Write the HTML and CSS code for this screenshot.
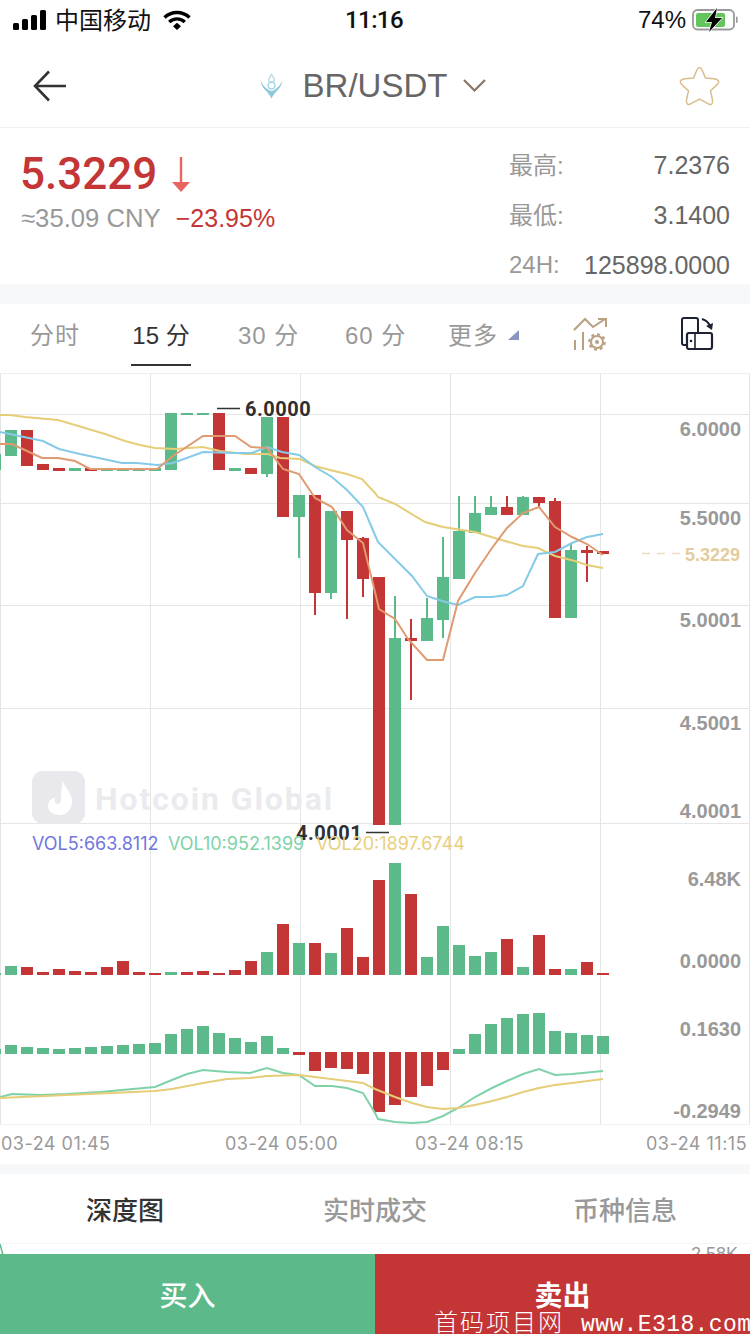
FILE: index.html
```html
<!DOCTYPE html>
<html lang="en">
<head>
  <meta charset="UTF-8" />
  <meta name="viewport" content="width=device-width, initial-scale=1.0"/>
  <title>BR/USDT</title>
  <link rel="stylesheet" href="styles.css">
</head>
<body>
  <div class="status-bar">
    <div class="status-left">
      <svg class="signal" width="34" height="20" viewBox="0 0 34 20">
        <rect x="0" y="13" width="6" height="7" rx="1.5"/>
        <rect x="9" y="9" width="6" height="11" rx="1.5"/>
        <rect x="18" y="5" width="6" height="15" rx="1.5"/>
        <rect x="27" y="0" width="6" height="20" rx="1.5"/>
      </svg>
      <span class="carrier">中国移动</span>
      <svg class="wifi" width="28" height="20" viewBox="0 0 28 20">
        <path d="M1.5 7.5a18 18 0 0 1 25 0" fill="none" stroke="#000" stroke-width="3.4"/>
        <path d="M6.2 12a11.400 11.400 0 0 1 15.600 0" fill="none" stroke="#000" stroke-width="3.4"/>
        <path d="M10 16.200l4-3.400 4 3.400-4 3.800z" fill="#000"/>
      </svg>
    </div>
    <div class="status-time">11:16</div>
    <div class="status-right">
      <span class="battery-pct">74%</span>
      <svg class="battery" width="46" height="24" viewBox="0 0 46 24">
        <rect x="1" y="2" width="41" height="19.500" rx="4.500" fill="#fff" stroke="#999" stroke-width="1.800"/>
        <rect x="4" y="5" width="29" height="14" rx="2" fill="#63c45c"/>
        <rect x="44" y="8.500" width="1.600" height="6.500" rx="0.800" fill="#999"/>
        <path d="M25 0L14 14h6l-3 10 13-14h-7z" fill="#000" stroke="#fff" stroke-width="1.400" paint-order="stroke"/>
      </svg>
    </div>
  </div>

  <div class="top-bar">
    <svg width="34" height="32" viewBox="0 0 34 32">
      <path d="M33 16H2M16 1.500L2 16l14 14.500" fill="none" stroke="#333" stroke-width="2.600"/>
    </svg>
    <div class="pair">
      <svg class="pair-logo" width="23" height="26" viewBox="0 0 23 26">
        <path d="M11.500 1.500c-1.500 2-2.800 4-2.800 5.500s1.300 2.500 2.800 2.500 2.800-1 2.800-2.500-1.300-3.500-2.800-5.500z" fill="none" stroke="#b8dde8" stroke-width="1.300"/>
        <circle cx="11.500" cy="12.500" r="3.400" fill="none" stroke="#a5d5e4" stroke-width="1.500"/>
        <path d="M1 8c-.5 7 7 9.500 10.500 17.500C15 17.500 22.500 15 22 8c-1.500 4.500-4.500 6.500-6.500 8-1.300 1-2.500 2-4 2s-2.700-1-4-2c-2-1.500-5-3.500-6.500-8z" fill="#8cc8dc"/>
      </svg>
      <span class="pair-name">BR/USDT</span>
      <svg width="23" height="13" viewBox="0 0 23 13">
        <path d="M1 1l10.500 10.500L22 1" fill="none" stroke="#8a7565" stroke-width="2.200"/>
      </svg>
    </div>
    <svg width="41" height="40" viewBox="0 0 41 40">
      <path d="M20.500 1.500c1.200 0 2 1 2.600 2.500l3.400 8 8.400.8c3.500.4 5.300 2 4.700 3.800-.4 1.100-1.500 2-2.500 3l-5.600 5.200 1.800 8.200c.5 2.600.3 4.700-1.100 5.300-1 .5-2.300-.1-3.700-1l-8-4.300-8 4.300c-1.400.9-2.700 1.500-3.700 1-1.400-.6-1.600-2.700-1.100-5.300l1.800-8.200-5.600-5.200c-1-1-2.100-1.900-2.500-3-.6-1.800 1.200-3.400 4.700-3.800l8.400-.8 3.400-8c.6-1.500 1.400-2.500 2.600-2.500z" fill="none" stroke="#d9bd8d" stroke-width="1.500"/>
    </svg>
  </div>

  <div class="ticker">
    <div class="ticker-main">
      <div class="price-row">
        <span class="price">5.3229</span>
        <svg width="18" height="35" viewBox="0 0 18 35">
          <path d="M9 0v27" stroke="#e8655f" stroke-width="2.400"/>
          <path d="M0 25h18l-9 10z" fill="#e8655f"/>
        </svg>
      </div>
      <div class="sub-row">
        <span class="cny">≈35.09 CNY</span>
        <span class="change">−23.95%</span>
      </div>
    </div>
    <div class="stats">
      <div class="stat"><span class="stat-label">最高:</span><span class="stat-value">7.2376</span></div>
      <div class="stat"><span class="stat-label">最低:</span><span class="stat-value">3.1400</span></div>
      <div class="stat"><span class="stat-label">24H:</span><span class="stat-value">125898.0000</span></div>
    </div>
  </div>

  <div class="band"></div>

  <div class="periods">
    <div class="period">分时</div>
    <div class="period active">15 分</div>
    <div class="period">30 分</div>
    <div class="period">60 分</div>
    <div class="period">更多<span class="more-tri"></span></div>
    <svg class="period-icon" width="35" height="34" viewBox="0 0 35 34">
      <path d="M1 13L12 2l8 8L32 2M25 2h8v8" fill="none" stroke="#b8a080" stroke-width="2"/>
      <path d="M2 23v10M10 15v18" stroke="#b8a080" stroke-width="2"/>
      <circle cx="24" cy="25" r="6" fill="none" stroke="#b8a080" stroke-width="2"/>
      <circle cx="24" cy="25" r="7.800" fill="none" stroke="#b8a080" stroke-width="2" stroke-dasharray="3.100 3"/>
      <circle cx="24" cy="25" r="2" fill="#b8a080"/>
    </svg>
    <svg class="period-icon" width="34" height="33" viewBox="0 0 34 33">
      <path d="M5 28H3a2 2 0 0 1-2-2V3a2 2 0 0 1 2-2h12a2 2 0 0 1 2 2v12" fill="none" stroke="#1d2233" stroke-width="2"/>
      <rect x="6" y="16" width="25" height="16" rx="2" fill="none" stroke="#1d2233" stroke-width="2.200"/>
      <path d="M14 16v16" fill="none" stroke="#1d2233" stroke-width="1.600"/>
      <circle cx="10" cy="24" r="1.300" fill="#1d2233"/>
      <path d="M21 2c3.500 1 6.500 3.500 8 7" fill="none" stroke="#1d2233" stroke-width="2"/>
      <path d="M25 9l6 4 1-7z" fill="#1d2233"/>
    </svg>
  </div>

  <svg class="chart" width="750" height="790" viewBox="0 374 750 790">
    <!-- grid -->
    <g class="grid">
      <path d="M0 414.500H750M0 503.500H750M0 605.500H750M0 708.500H750M0 823.500H750"/>
      <path d="M0.500 374V1124M150.500 374V1124M300.500 374V1124M450.500 374V1124M600.500 374V1124M749.500 374V1124"/>
      <path class="grid-end" d="M0 1124.500H750"/>
    </g>

    <!-- watermark -->
    <rect class="mark-box" x="32" y="771" width="53" height="53" rx="11"/>
    <path d="M63 780c0 6 8 11 9 20 1 8-5 15-12 15-6 0-12-3-12-9 0-4 3-8 7-8-1 3 0 6 3 6 3 0 3-4 3-8 0-5 1-11 2-16z" fill="#fff"/>
    <text class="mark-text" x="95" y="810">Hotcoin Global</text>

    <!-- candles -->
    <g class="up">
      <rect x="-11" y="454" width="12" height="16"/>
      <rect x="5" y="430" width="12" height="26"/>
      <rect x="69" y="468" width="12" height="3"/>
      <rect x="101" y="469" width="12" height="2"/>
      <rect x="117" y="469" width="12" height="2"/>
      <rect x="133" y="469" width="12" height="2"/>
      <rect x="149" y="468" width="12" height="3"/>
      <rect x="165" y="413" width="12" height="57"/>
      <rect x="181" y="413" width="12" height="2"/>
      <rect x="197" y="413" width="12" height="2"/>
      <rect x="229" y="468" width="12" height="3"/>
      <rect x="261" y="417" width="12" height="57"/>
      <rect x="266" y="474" width="2" height="3"/>
      <rect x="293" y="495" width="12" height="22"/>
      <rect x="298" y="517" width="2" height="41"/>
      <rect x="325" y="511" width="12" height="82"/>
      <rect x="330" y="593" width="2" height="6"/>
      <rect x="389" y="638" width="12" height="187"/>
      <rect x="394" y="596" width="2" height="42"/>
      <rect x="421" y="618" width="12" height="23"/>
      <rect x="426" y="598" width="2" height="20"/>
      <rect x="437" y="577" width="12" height="43"/>
      <rect x="442" y="537" width="2" height="101"/>
      <rect x="453" y="531" width="12" height="48"/>
      <rect x="458" y="496" width="2" height="35"/>
      <rect x="469" y="513" width="12" height="20"/>
      <rect x="474" y="496" width="2" height="17"/>
      <rect x="485" y="507" width="12" height="8"/>
      <rect x="490" y="496" width="2" height="11"/>
      <rect x="517" y="497" width="12" height="18"/>
      <rect x="522" y="496" width="2" height="1"/>
      <rect x="565" y="550" width="12" height="68"/>
      <rect x="570" y="544" width="2" height="6"/>
    </g>
    <g class="down">
      <rect x="21" y="430" width="12" height="36"/>
      <rect x="37" y="464" width="12" height="6"/>
      <rect x="53" y="468" width="12" height="3"/>
      <rect x="85" y="468" width="12" height="3"/>
      <rect x="213" y="413" width="12" height="57"/>
      <rect x="245" y="468" width="12" height="6"/>
      <rect x="277" y="417" width="12" height="100"/>
      <rect x="309" y="495" width="12" height="98"/>
      <rect x="314" y="593" width="2" height="22"/>
      <rect x="341" y="511" width="12" height="29"/>
      <rect x="346" y="540" width="2" height="79"/>
      <rect x="357" y="538" width="12" height="41"/>
      <rect x="362" y="537" width="2" height="60"/>
      <rect x="373" y="577" width="12" height="248"/>
      <rect x="405" y="638" width="12" height="3"/>
      <rect x="410" y="619" width="2" height="81"/>
      <rect x="501" y="507" width="12" height="8"/>
      <rect x="506" y="496" width="2" height="11"/>
      <rect x="533" y="497" width="12" height="6"/>
      <rect x="538" y="503" width="2" height="4"/>
      <rect x="549" y="501" width="12" height="117"/>
      <rect x="554" y="498" width="2" height="3"/>
      <rect x="581" y="550" width="12" height="3"/>
      <rect x="586" y="546" width="2" height="36"/>
      <rect x="597" y="551" width="12" height="3"/>
    </g>

    <!-- moving averages -->
    <polyline class="line ma-yellow" points="0,415 10,415 25,417 58,420 75,425 105,434 125,441 140,445 155,448 175,449 203,447 220,451 245,454 268,454 280,458 300,459 315,466 330,470 347,474 362,479 375,493 378,497 395,504 425,522 443,527 475,532 498,539 523,546 538,548 555,556 575,561 587,565 603,568"/>
    <polyline class="line ma-blue" points="0,432 43,441 59,449 80,454 122,463 137,463 157,465 173,463 203,452 233,453 252,453 267,447 282,452 299,455 315,467 332,477 347,490 363,507 375,535 378,542 395,559 412,576 427,596 442,601 458,605 475,597 492,597 507,595 523,586 538,554 555,552 572,543 587,537 603,534"/>
    <polyline class="line ma-orange" points="0,444 12,444 27,451 42,458 58,458 75,461 90,469 157,469 173,456 203,436 235,436 251,447 267,448 283,469 299,474 315,498 332,507 347,530 363,543 375,592 379,609 395,619 408,639 427,660 443,660 458,601 475,573 492,548 507,528 523,513 539,507 555,527 572,537 587,544 603,555"/>

    <!-- price labels -->
    <path class="tag-line" d="M217 408.500H240M366 832.500H389"/>
    <text class="tag" x="245" y="416">6.0000</text>
    <text class="tag" x="296" y="840">4.0001</text>
    <path class="last-dash" d="M642 553.500H680"/>
    <text class="axis last" x="740" y="561">5.3229</text>
    <text class="axis" x="741" y="436">6.0000</text>
    <text class="axis" x="741" y="525">5.5000</text>
    <text class="axis" x="741" y="627">5.0001</text>
    <text class="axis" x="741" y="730">4.5001</text>
    <text class="axis" x="741" y="818">4.0001</text>

    <!-- volume -->
    <text class="vol vol5" x="32" y="850">VOL5:663.8112</text>
    <text class="vol vol10" x="168" y="850">VOL10:952.1399</text>
    <text class="vol vol20" x="316" y="850">VOL20:1897.6744</text>
    <g class="up">
      <rect x="-11" y="973" width="12" height="2"/>
      <rect x="5" y="966" width="12" height="9"/>
      <rect x="165" y="972" width="12" height="3"/>
      <rect x="261" y="952" width="12" height="23"/>
      <rect x="293" y="943" width="12" height="32"/>
      <rect x="325" y="953" width="12" height="22"/>
      <rect x="389" y="863" width="12" height="112"/>
      <rect x="421" y="957" width="12" height="18"/>
      <rect x="437" y="926" width="12" height="49"/>
      <rect x="453" y="945" width="12" height="30"/>
      <rect x="469" y="956" width="12" height="19"/>
      <rect x="485" y="952" width="12" height="23"/>
      <rect x="517" y="967" width="12" height="8"/>
      <rect x="565" y="969" width="12" height="6"/>
    </g>
    <g class="down">
      <rect x="21" y="967" width="12" height="8"/>
      <rect x="37" y="972" width="12" height="3"/>
      <rect x="53" y="969" width="12" height="6"/>
      <rect x="69" y="971" width="12" height="4"/>
      <rect x="85" y="972" width="12" height="3"/>
      <rect x="101" y="967" width="12" height="8"/>
      <rect x="117" y="961" width="12" height="14"/>
      <rect x="133" y="972" width="12" height="3"/>
      <rect x="149" y="973" width="12" height="2"/>
      <rect x="181" y="972" width="12" height="3"/>
      <rect x="197" y="971" width="12" height="4"/>
      <rect x="213" y="973" width="12" height="2"/>
      <rect x="229" y="970" width="12" height="5"/>
      <rect x="245" y="961" width="12" height="14"/>
      <rect x="277" y="924" width="12" height="51"/>
      <rect x="309" y="943" width="12" height="32"/>
      <rect x="341" y="928" width="12" height="47"/>
      <rect x="357" y="957" width="12" height="18"/>
      <rect x="373" y="880" width="12" height="95"/>
      <rect x="405" y="894" width="12" height="81"/>
      <rect x="501" y="939" width="12" height="36"/>
      <rect x="533" y="935" width="12" height="40"/>
      <rect x="549" y="969" width="12" height="6"/>
      <rect x="581" y="962" width="12" height="13"/>
      <rect x="597" y="973" width="12" height="2"/>
    </g>
    <text class="axis" x="741" y="886">6.48K</text>
    <text class="axis" x="741" y="968">0.0000</text>

    <!-- macd -->
    <g class="up">
      <rect x="-11" y="1049" width="12" height="5"/>
      <rect x="5" y="1045" width="12" height="9"/>
      <rect x="21" y="1047" width="12" height="7"/>
      <rect x="37" y="1048" width="12" height="6"/>
      <rect x="53" y="1049" width="12" height="5"/>
      <rect x="69" y="1048" width="12" height="6"/>
      <rect x="85" y="1047" width="12" height="7"/>
      <rect x="101" y="1046" width="12" height="8"/>
      <rect x="117" y="1045" width="12" height="9"/>
      <rect x="133" y="1044" width="12" height="10"/>
      <rect x="149" y="1043" width="12" height="11"/>
      <rect x="165" y="1034" width="12" height="20"/>
      <rect x="181" y="1029" width="12" height="25"/>
      <rect x="197" y="1026" width="12" height="28"/>
      <rect x="213" y="1033" width="12" height="21"/>
      <rect x="229" y="1038" width="12" height="16"/>
      <rect x="245" y="1042" width="12" height="12"/>
      <rect x="261" y="1036" width="12" height="18"/>
      <rect x="277" y="1048" width="12" height="6"/>
      <rect x="453" y="1049" width="12" height="5"/>
      <rect x="469" y="1034" width="12" height="20"/>
      <rect x="485" y="1024" width="12" height="30"/>
      <rect x="501" y="1018" width="12" height="36"/>
      <rect x="517" y="1014" width="12" height="40"/>
      <rect x="533" y="1013" width="12" height="41"/>
      <rect x="549" y="1031" width="12" height="23"/>
      <rect x="565" y="1033" width="12" height="21"/>
      <rect x="581" y="1035" width="12" height="19"/>
      <rect x="597" y="1036" width="12" height="18"/>
    </g>
    <g class="down">
      <rect x="293" y="1052" width="12" height="3"/>
      <rect x="309" y="1052" width="12" height="19"/>
      <rect x="325" y="1052" width="12" height="16"/>
      <rect x="341" y="1052" width="12" height="17"/>
      <rect x="357" y="1052" width="12" height="22"/>
      <rect x="373" y="1052" width="12" height="60"/>
      <rect x="389" y="1052" width="12" height="53"/>
      <rect x="405" y="1052" width="12" height="45"/>
      <rect x="421" y="1052" width="12" height="34"/>
      <rect x="437" y="1052" width="12" height="18"/>
    </g>
    <polyline class="line macd-green" points="0,1097 12,1094 40,1095 67,1094 100,1092 133,1089 155,1087 172,1080 187,1074 203,1070 227,1072 250,1073 267,1068 283,1073 299,1075 315,1086 332,1086 347,1088 363,1093 375,1113 378,1119 395,1122 412,1123 427,1122 443,1116 458,1108 475,1097 492,1088 507,1081 523,1074 539,1069 555,1075 572,1074 603,1071"/>
    <polyline class="line macd-yellow" points="0,1098 67,1095 155,1091 172,1089 203,1083 227,1079 250,1078 267,1076 299,1075 315,1077 347,1081 363,1083 375,1089 395,1097 412,1103 427,1107 443,1109 458,1108 475,1105 492,1101 507,1097 523,1092 539,1088 555,1085 572,1083 603,1079"/>
    <text class="axis" x="741" y="1036">0.1630</text>
    <text class="axis" x="741" y="1118">-0.2949</text>

    <!-- time axis -->
    <text class="time" x="1" y="1150">03-24 01:45</text>
    <text class="time" x="225" y="1150">03-24 05:00</text>
    <text class="time" x="415" y="1150">03-24 08:15</text>
    <text class="time" x="646" y="1150">03-24 11:15</text>
  </svg>

  <div class="band band-thin"></div>

  <div class="info-tabs">
    <div class="info-tab active">深度图</div>
    <div class="info-tab">实时成交</div>
    <div class="info-tab">币种信息</div>
  </div>

  <div class="depth-peek">
    <svg width="4" height="11" viewBox="0 0 4 11"><path d="M0 0l3 11" stroke="#5cba8a" stroke-width="1.500"/></svg>
    <span class="depth-label">2.58K</span>
  </div>

  <div class="actions">
    <div class="action buy">买入</div>
    <div class="action sell">卖出</div>
  </div>

  <div class="site-mark"><span class="site-cn">首码项目网</span><span class="site-url">www.E318.com</span></div>
</body>
</html>
```

FILE: styles.css
```css
body {
  font-family: 'Liberation Sans', 'Noto Sans CJK SC', sans-serif;
  margin: 0;
  padding: 0;
  background: white;
  width: 750px;
  height: 1334px;
  overflow: hidden;
  position: relative;
}

svg {
  display: block;
}

.status-bar {
  height: 44px;
  display: grid;
  grid-template-columns: 1fr auto 1fr;
  align-items: center;
  padding: 0 12px 4px 13px;
  box-sizing: border-box;
}

.status-left {
  display: flex;
  align-items: center;
}

.carrier {
  font-size: 24px;
  color: #111;
  margin: 0 0 4px 8px;
}

.wifi {
  margin-left: 12px;
}

.status-time {
  font-family: Roboto, sans-serif;
  font-weight: 500;
  font-size: 24px;
  letter-spacing: -0.600px;
  color: #111;
  margin-right: 3px;
}

.status-right {
  display: flex;
  align-items: center;
  justify-content: flex-end;
  gap: 6px;
}

.battery-pct {
  font-size: 24px;
  color: #111;
}

.top-bar {
  height: 83px;
  display: flex;
  justify-content: space-between;
  align-items: center;
  padding: 0 30px 0 33px;
  border-bottom: 1px solid #f0f0f0;
}

.pair {
  display: flex;
  align-items: center;
}

.pair-name {
  font-size: 33px;
  color: #666;
  margin: 0 16px 0 20px;
}

.ticker {
  height: 156px;
  display: flex;
  justify-content: space-between;
  padding: 12px 20px 0 20px;
  box-sizing: border-box;
}

.price-row {
  display: flex;
  align-items: center;
  gap: 15px;
  height: 50px;
  margin-top: 9px;
}

.price {
  font-family: Roboto, sans-serif;
  font-weight: 500;
  font-size: 44px;
  color: #c43535;
}

.sub-row {
  display: flex;
  align-items: baseline;
  gap: 15px;
  margin: 5px 0 0 1px;
  font-size: 25px;
}

.cny {
  color: #999;
  font-size: 25.700px;
}

.change {
  color: #c43535;
}

.stats {
  width: 221px;
  display: grid;
  grid-auto-rows: 50px;
}

.stat {
  display: flex;
  justify-content: space-between;
  align-items: center;
  font-size: 25px;
}

.stat-label {
  color: #999;
  font-size: 24px;
  margin-bottom: 4px;
}

.stat:last-child .stat-label {
  margin-bottom: 0;
}

.stat-value {
  color: #666;
}

.band {
  height: 20px;
  background: #f7f8fa;
}

.band-thin {
  height: 10px;
}

.periods {
  height: 70px;
  display: grid;
  grid-template-columns: 102px 106px 107px 103px 125px 108px 1fr;
  padding-left: 30px;
  box-sizing: border-box;
  border-bottom: 1px solid #eee;
}

.period {
  height: 62px;
  padding-bottom: 4px;
  display: flex;
  align-items: center;
  font-size: 24px;
  color: #999;
  letter-spacing: 1px;
  justify-self: start;
  box-sizing: border-box;
  white-space: nowrap;
}

.period.active {
  color: #333;
  letter-spacing: 0;
  width: 60px;
  justify-content: center;
  padding-bottom: 2px;
  border-bottom: 2px solid #333;
  margin-left: -1px;
}

.more-tri {
  width: 0;
  height: 0;
  margin: 4px 0 0 10px;
  border-left: 11px solid transparent;
  border-bottom: 10px solid #8a95c0;
}

.period-icon {
  margin-top: 13px;
}

.grid path {
  fill: none;
  stroke: #e5e5e5;
  stroke-width: 1;
}

.grid .grid-end {
  stroke: #f2f2f2;
}

.mark-box {
  fill: #e9e9ed;
}

.mark-text {
  font-family: Roboto, sans-serif;
  font-weight: 700;
  font-size: 32px;
  letter-spacing: 1.900px;
  fill: #ebebef;
}

.up {
  fill: #5cba8a;
}

.down {
  fill: #c43535;
}

.line {
  fill: none;
  stroke-width: 2;
}

.ma-yellow {
  stroke: #e6cd78;
}

.ma-blue {
  stroke: #85cbe8;
}

.ma-orange {
  stroke: #e09a70;
}

.macd-green {
  stroke: #7fd2a8;
}

.macd-yellow {
  stroke: #e6cd78;
}

.tag-line {
  fill: none;
  stroke: #333;
  stroke-width: 1.500;
}

.tag {
  font-family: Roboto, sans-serif;
  font-weight: 700;
  font-size: 20px;
  letter-spacing: 0.500px;
  fill: #2f2f2f;
}

.last-dash {
  fill: none;
  stroke: #ecdcc0;
  stroke-width: 1.500;
  stroke-dasharray: 8 7;
}

.axis {
  font-weight: 700;
  font-size: 20px;
  fill: #999;
  text-anchor: end;
}

.axis.last {
  font-size: 18px;
  fill: #e3cd9e;
}

.vol {
  font-family: Inter, sans-serif;
  font-size: 18px;
}

.vol5 {
  fill: #7276e0;
}

.vol10 {
  fill: #7dd3a8;
}

.vol20 {
  fill: #e8cf80;
}

.time {
  font-family: Inter, sans-serif;
  font-size: 18px;
  letter-spacing: 0.500px;
  fill: #999;
}

.info-tabs {
  height: 69px;
  display: grid;
  grid-template-columns: repeat(3, 1fr);
  align-items: center;
  text-align: center;
  border-bottom: 1px solid #f5f5f5;
}

.info-tab {
  font-size: 26px;
  font-weight: 500;
  color: #999;
}

.info-tab.active {
  color: #333;
}

.depth-peek {
  height: 10px;
  overflow: hidden;
  position: relative;
}

.depth-label {
  position: absolute;
  right: 12px;
  top: 0;
  font-size: 18px;
  line-height: 20px;
  color: #999;
}

.actions {
  height: 80px;
  display: grid;
  grid-template-columns: 1fr 1fr;
}

.action {
  display: flex;
  align-items: center;
  justify-content: center;
  font-size: 28px;
  font-weight: 500;
  color: white;
}

.buy {
  background: #5cba8a;
}

.sell {
  background: #c43535;
  font-weight: 700;
}

.site-mark {
  position: absolute;
  left: 434px;
  bottom: -6px;
  display: flex;
  align-items: baseline;
  gap: 17px;
  line-height: 30px;
  color: white;
  white-space: nowrap;
}

.site-cn {
  font-family: 'Noto Sans CJK SC', sans-serif;
  font-size: 24px;
  font-weight: 300;
  letter-spacing: 2px;
}

.site-url {
  font-family: 'Liberation Mono', monospace;
  font-size: 23px;
  letter-spacing: 0.400px;
}
```
